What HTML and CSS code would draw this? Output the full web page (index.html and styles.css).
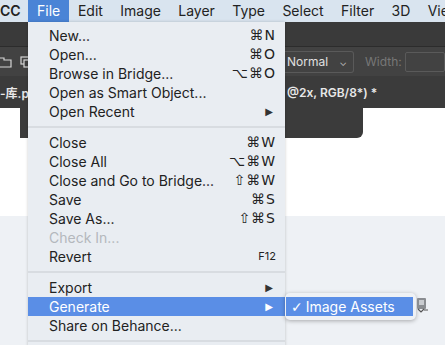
FILE: index.html
```html
<!DOCTYPE html>
<html lang="en">
<head>
  <meta charset="UTF-8" />
  <title>File menu</title>
  <link rel="stylesheet" href="styles.css">
</head>
<body>
  <div class="menubar">
    <span class="app-name">CC</span>
    <span class="top-item active">File</span>
    <span class="top-item">Edit</span>
    <span class="top-item">Image</span>
    <span class="top-item">Layer</span>
    <span class="top-item">Type</span>
    <span class="top-item">Select</span>
    <span class="top-item">Filter</span>
    <span class="top-item">3D</span>
    <span class="top-item">Vie</span>
  </div>

  <div class="workspace">
    <div class="appbar"></div>
    <div class="options">
      <div class="tool-icons">
        <svg width="12" height="12" viewBox="0 0 12 12"><path d="M-2 2h6v2h7v7h-13z" fill="none" stroke="#d6d6d6" stroke-width="1.2"/></svg>
        <svg width="14" height="12" viewBox="0 0 14 12"><rect x="1" y="1" width="9" height="7" fill="none" stroke="#d6d6d6" stroke-width="1.2"/><rect x="4" y="4" width="9" height="7" fill="#3e3e3e" stroke="#d6d6d6" stroke-width="1.2"/></svg>
      </div>
      <div class="blend">Normal <span class="chev">&#8964;</span></div>
      <span class="width-label">Width:</span>
      <span class="width-input"></span>
    </div>
    <div class="tabs">
      <span class="tab-start">-库.ps</span>
      <span class="tab-end">@2x, RGB/8*) *</span>
    </div>
    <div class="canvas">
      <div class="panel-tail"></div>
    </div>
    <div class="pasteboard"></div>
  </div>

  <div class="menu">
    <div class="item"><span>New...</span><span class="key">⌘N</span></div>
    <div class="item"><span>Open...</span><span class="key">⌘O</span></div>
    <div class="item"><span>Browse in Bridge...</span><span class="key">⌥⌘O</span></div>
    <div class="item"><span>Open as Smart Object...</span></div>
    <div class="item"><span>Open Recent</span><span class="arrow">▶</span></div>
    <div class="sep"></div>
    <div class="item"><span>Close</span><span class="key">⌘W</span></div>
    <div class="item"><span>Close All</span><span class="key">⌥⌘W</span></div>
    <div class="item"><span>Close and Go to Bridge...</span><span class="key">⇧⌘W</span></div>
    <div class="item"><span>Save</span><span class="key">⌘S</span></div>
    <div class="item"><span>Save As...</span><span class="key">⇧⌘S</span></div>
    <div class="item disabled"><span>Check In...</span></div>
    <div class="item"><span>Revert</span><span class="key small">F12</span></div>
    <div class="sep"></div>
    <div class="item"><span>Export</span><span class="arrow">▶</span></div>
    <div class="item selected"><span>Generate</span><span class="arrow">▶</span></div>
    <div class="item"><span>Share on Behance...</span></div>
    <div class="sep"></div>
  </div>

  <div class="submenu">
    <div class="sub-item"><span class="check">✓</span>Image Assets</div>
  </div>

  <svg class="gen-icon" width="14" height="16" viewBox="0 0 14 16">
    <rect x="2" y="1" width="9" height="11" rx="1" fill="#8a8d91"/>
    <rect x="4" y="3" width="5" height="5" fill="#c9ccd0"/>
    <path d="M3 12l3 3 3-3M9 13h4" fill="none" stroke="#555" stroke-width="1.2"/>
  </svg>
</body>
</html>
```

FILE: styles.css
```css
body {
  margin: 0;
  width: 445px;
  height: 345px;
  overflow: hidden;
  position: relative;
  font-family: Inter, "Liberation Sans", "DejaVu Sans", "Noto Sans CJK SC", sans-serif;
  font-size: 14px;
  color: #222;
  background: #eef1f5;
}

.menubar {
  height: 22px;
  display: flex;
  align-items: center;
  background: #d9e4ef;
  white-space: nowrap;
  overflow: hidden;
}

.app-name {
  flex-shrink: 0;
  font-weight: 600;
  width: 28px;
  line-height: 22px;
}

.top-item {
  flex-shrink: 0;
  padding: 0 8.7px;
  line-height: 22px;
}

.top-item.active {
  background: #4a84d6;
  color: #fff;
  padding: 0 9px;
}

.workspace {
  height: 323px;
  display: flex;
  flex-direction: column;
}

.appbar {
  height: 24px;
  background: #3a3a3a;
  border-bottom: 1px solid #2c2c2c;
}

.options {
  height: 29px;
  display: flex;
  align-items: center;
  background: #424242;
  color: #cfcfcf;
  font-size: 12px;
}

.tool-icons {
  display: flex;
  gap: 8px;
  width: 285px;
}

.blend {
  width: 60px;
  height: 20px;
  line-height: 20px;
  border: 1px solid #5a5a5a;
  border-left: none;
  border-radius: 0 3px 3px 0;
  padding-left: 2px;
  display: flex;
  justify-content: space-between;
  padding-right: 6px;
  color: #e0e0e0;
}

.chev {
  font-size: 10px;
  color: #bdbdbd;
}

.width-label {
  margin-left: 11px;
  color: #777;
}

.width-input {
  margin-left: 3px;
  width: 38px;
  height: 18px;
  border: 1px solid #5a5a5a;
  border-radius: 2px;
}

.tabs {
  height: 32px;
  display: flex;
  align-items: center;
  background: #3b3b3b;
  color: #e8e8e8;
  font-size: 12px;
  font-weight: 600;
  white-space: nowrap;
}

.tab-start {
  flex-shrink: 0;
  width: 287px;
}

.canvas {
  height: 108px;
  background: #fff;
}

.panel-tail {
  margin-left: 20px;
  width: 343px;
  height: 30px;
  background: #3b3b3b;
  border-radius: 0 0 6px 0;
}

.pasteboard {
  flex: 1;
  background: #eef1f5;
}

.menu {
  position: absolute;
  left: 28px;
  top: 22px;
  width: 257px;
  padding-top: 4px;
  background: #e9edf2;
  box-shadow: 0 0 3px rgba(0, 0, 0, 0.2);
}

.item {
  height: 19px;
  line-height: 19px;
  padding: 0 9px 0 21px;
  display: flex;
  justify-content: space-between;
  white-space: nowrap;
}

.item.disabled {
  color: #b4b8bd;
}

.item.selected {
  background: #5a8ee6;
  color: #fff;
}

.key {
  font-family: "DejaVu Sans", sans-serif;
  font-size: 14px;
  letter-spacing: 1px;
}

.key.small {
  font-family: Inter, "Liberation Sans", sans-serif;
  font-size: 11px;
  letter-spacing: 0;
}

.arrow {
  font-family: "DejaVu Sans", sans-serif;
  font-size: 10px;
  padding-right: 3px;
  color: #333;
}

.item.selected .arrow {
  color: #fff;
}

.sep {
  height: 12px;
  display: flex;
  align-items: center;
}

.sep::before {
  content: "";
  flex: 1;
  height: 2px;
  background: #d8dce1;
}

.submenu {
  position: absolute;
  left: 285px;
  top: 293px;
  width: 131px;
  padding: 4px 0;
  background: #eef1f5;
  border-radius: 5px;
  box-shadow: 0 1px 4px rgba(0, 0, 0, 0.3);
}

.sub-item {
  margin: 0 3px 0 1px;
  height: 19px;
  line-height: 19px;
  padding-left: 5px;
  background: #5a8ee6;
  color: #fff;
  white-space: nowrap;
}

.check {
  font-family: "DejaVu Sans", sans-serif;
  font-weight: bold;
  margin-right: 3px;
}

.gen-icon {
  position: absolute;
  left: 415px;
  top: 297px;
}
```
